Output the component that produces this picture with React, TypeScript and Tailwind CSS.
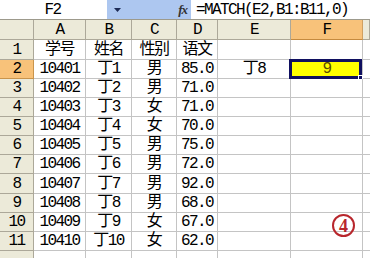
import React from "react";

const colWidths = ["w-[34px]", "w-[52px]", "w-[46px]", "w-[45px]", "w-[41px]", "w-[73px]", "w-[72px]", "w-[7px]"];
const colNames = ["A", "B", "C", "D", "E", "F"];

const rows: string[][] = [
  ["学号", "姓名", "性别", "语文", "", ""],
  ["10401", "丁1", "男", "85.0", "丁8", "9"],
  ["10402", "丁2", "男", "71.0", "", ""],
  ["10403", "丁3", "女", "71.0", "", ""],
  ["10404", "丁4", "女", "70.0", "", ""],
  ["10405", "丁5", "男", "75.0", "", ""],
  ["10406", "丁6", "男", "72.0", "", ""],
  ["10407", "丁7", "男", "92.0", "", ""],
  ["10408", "丁8", "男", "68.0", "", ""],
  ["10409", "丁9", "女", "67.0", "", ""],
  ["10410", "丁10", "女", "62.0", "", ""],
];

const rowHeights = ["h-[20px]", "h-[19px]", "h-[19px]", "h-[19px]", "h-[19px]", "h-[19px]", "h-[19px]", "h-[20px]", "h-[19px]", "h-[19px]", "h-[19px]"];

const font = "font-['Liberation_Mono','Noto_Sans_CJK_SC',monospace] text-[16px] tracking-[-1.6px] leading-none";

export default function App() {
  return (
    <div className={`relative w-[370px] h-[258px] overflow-hidden bg-white text-black ${font}`}>
      {/* formula bar */}
      <div className="flex h-[19px] items-center bg-white">
        <div className="flex w-[107px] justify-center pr-[2px]">F2</div>
        <div className="flex h-full w-[84px] items-center justify-between bg-[#adc7f0] pl-[7px] pr-[4px]">
          <svg width="7" height="4" viewBox="0 0 7 4"><path d="M0 0h7L3.5 4z" fill="#1c2a55" /></svg>
          <span className="font-['Liberation_Serif',serif] text-[13px] italic font-bold tracking-[-1px] text-[#333]">fx</span>
        </div>
        <div className="pl-[5px]">=MATCH(E2,B1:B11,0)</div>
      </div>

      {/* column headers */}
      <div className="flex h-[21px] border-t border-[#9d9a8c]">
        {colWidths.map((w, i) => {
          const name = i === 0 ? "" : colNames[i - 1] ?? "";
          const sel = name === "F";
          return (
            <div
              key={i}
              className={`${w} shrink-0 flex items-center justify-center border-r border-b ${
                sel ? "bg-[#f8c27a] border-b-[#c58a3f] border-r-[#d0a060]" : "bg-[#ecead9] border-[#aca899]"
              }`}
            >
              {name}
            </div>
          );
        })}
      </div>

      {/* rows */}
      {rows.map((r, ri) => {
        const num = ri + 1;
        return (
          <div key={ri} className={`flex ${rowHeights[ri]}`}>
            <div
              className={`w-[34px] shrink-0 flex items-center justify-center border-r border-b ${
                num === 2 ? "bg-[#f8c27a] border-[#c9944c]" : "bg-[#ecead9] border-[#aca899]"
              }`}
            >
              {num}
            </div>
            {r.map((v, ci) => {
              const active = num === 2 && ci === 5;
              return (
                <div
                  key={ci}
                  className={`${colWidths[ci + 1]} shrink-0 relative flex items-center justify-center border-r border-b border-[#c4c4c4] ${
                    active ? "bg-[#ffff00] text-[#5a4a00]" : ""
                  }`}
                >
                  {active && (
                    <div className="absolute left-[-2px] top-[-1px] right-0 bottom-[-1px] border-[3px] border-[#101060]">
                      <div className="absolute right-[-4px] bottom-[-4px] w-[5px] h-[5px] bg-[#101060] border border-white" />
                    </div>
                  )}
                  <span className="relative">{v}</span>
                </div>
              );
            })}
            <div className="w-[7px] shrink-0 border-b border-[#c4c4c4]" />
          </div>
        );
      })}

      {/* partial row 12 */}
      <div className="flex h-[7px]">
        <div className="w-[34px] shrink-0 bg-[#ecead9] border-r border-[#aca899]" />
        {colWidths.slice(1, 7).map((w, i) => (
          <div key={i} className={`${w} shrink-0 border-r border-[#c4c4c4]`} />
        ))}
      </div>

      {/* annotation */}
      <div className="absolute left-[332px] top-[214px] w-[23px] h-[23px] rounded-full border-[2.5px] border-[#b8262c] flex items-center justify-center font-['Liberation_Serif',serif] text-[18px] font-bold tracking-normal text-[#b8262c]">
        4
      </div>
    </div>
  );
}
